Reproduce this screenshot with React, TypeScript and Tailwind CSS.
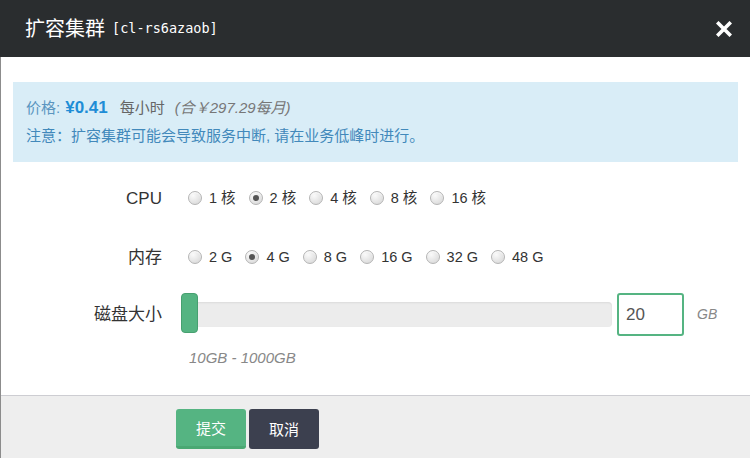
import React from "react";

function Radio({ label, checked }: { label: string; checked?: boolean }) {
  return (
    <div className="flex items-center">
      <span className="w-[14px] h-[14px] rounded-full border border-[#b4b4b4] bg-[radial-gradient(circle_at_35%_30%,#fafafa,#d4d4d4)] flex items-center justify-center shadow-[inset_0_1px_1px_rgba(255,255,255,0.8)]">
        {checked && <span className="w-[6px] h-[6px] rounded-full bg-[#555]" />}
      </span>
      <span className="ml-[7px] text-[14.5px] text-[#333] leading-none">{label}</span>
    </div>
  );
}

export default function App() {
  const cpus = ["1 核", "2 核", "4 核", "8 核", "16 核"];
  const mems = ["2 G", "4 G", "8 G", "16 G", "32 G", "48 G"];
  return (
    <div className="w-[750px] h-[458px] bg-white overflow-hidden flex flex-col font-[Liberation_Sans,Noto_Sans_CJK_SC,sans-serif]">
      <div className="h-[57px] shrink-0 bg-[#2a2d2f] flex items-center justify-between pl-[25px] pr-[18px]">
        <div className="flex items-center text-white">
          <span className="text-[20px] leading-none">扩容集群</span>
          <span className="ml-[7px] text-[13.5px] leading-none font-[DejaVu_Sans_Mono,monospace]">[cl-rs6azaob]</span>
        </div>
        <svg width="16" height="16" viewBox="0 0 16 16" className="mt-[1px]">
          <path d="M2.5 2.5 L13.5 13.5 M13.5 2.5 L2.5 13.5" stroke="#ffffff" strokeWidth="3.6" strokeLinecap="square" />
        </svg>
      </div>
      <div className="flex-1 flex flex-col border-l border-[#8c8c8c]">
        <div className="flex-1 flex flex-col">
          <div className="mt-[25px] ml-[12px] mr-[12px] h-[80px] bg-[#d9edf7] px-[13px] flex flex-col">
            <div className="mt-[15px] h-[20px] flex items-center text-[15px] leading-none">
              <span className="text-[#5a95c0]">价格:</span>
              <span className="ml-[5px] text-[17px] font-bold text-[#1f8dd6]">¥0.41</span>
              <span className="ml-[12px] text-[#666]">每小时</span>
              <span className="ml-[10px] italic text-[#777]">(合￥297.29每月)</span>
            </div>
            <div className="mt-[8px] h-[20px] flex items-center text-[15px] leading-none text-[#4289bb]">
              注意：扩容集群可能会导致服务中断, 请在业务低峰时进行。
            </div>
          </div>
          <div className="mt-[21px] h-[30px] flex items-center">
            <div className="w-[161px] text-right text-[17px] text-[#333] leading-none">CPU</div>
            <div className="ml-[26px] flex items-center gap-[13px]">
              {cpus.map((c, i) => (
                <Radio key={c} label={c} checked={i === 1} />
              ))}
            </div>
          </div>
          <div className="mt-[29px] h-[30px] flex items-center">
            <div className="w-[161px] text-right text-[17px] text-[#333] leading-none">内存</div>
            <div className="ml-[26px] flex items-center gap-[13px]">
              {mems.map((m, i) => (
                <Radio key={m} label={m} checked={i === 1} />
              ))}
            </div>
          </div>
          <div className="mt-[20px] h-[44px] flex items-center">
            <div className="w-[161px] text-right text-[17px] text-[#333] leading-none">磁盘大小</div>
            <div className="ml-[19px] relative w-[431px] h-[44px] flex items-center">
              <div className="ml-[1px] w-[430px] h-[25px] rounded-[4px] bg-[#ececec] shadow-[inset_0_1px_2px_rgba(0,0,0,0.08)]" />
              <div className="absolute left-0 top-[1px] w-[17px] h-[40px] rounded-[4px] bg-[#55b482] border border-[#47a070]" />
            </div>
            <div className="ml-[5px] w-[67px] h-[43px] rounded-[3px] border-2 border-[#55b482] flex items-center pl-[7px] text-[17px] text-[#555] leading-none">
              20
            </div>
            <div className="ml-[13px] italic text-[14px] text-[#888] leading-none">GB</div>
          </div>
          <div className="mt-[11px] ml-[188px] h-[20px] flex items-center italic text-[15px] text-[#888] leading-none">
            10GB - 1000GB
          </div>
        </div>
        <div className="h-[63px] shrink-0 border-t border-[#cdcdd2] bg-[#eeeeee] flex items-start pt-[13px] pl-[175px]">
          <button className="w-[70px] h-[40px] rounded-[3px] bg-[#55b482] border-b-[3px] border-[#4aa873] text-white text-[15px] leading-none flex items-center justify-center pt-[2px]">
            提交
          </button>
          <button className="ml-[3px] w-[70px] h-[40px] rounded-[3px] bg-[#3c404f] text-white text-[15px] leading-none flex items-center justify-center">
            取消
          </button>
        </div>
      </div>
    </div>
  );
}
